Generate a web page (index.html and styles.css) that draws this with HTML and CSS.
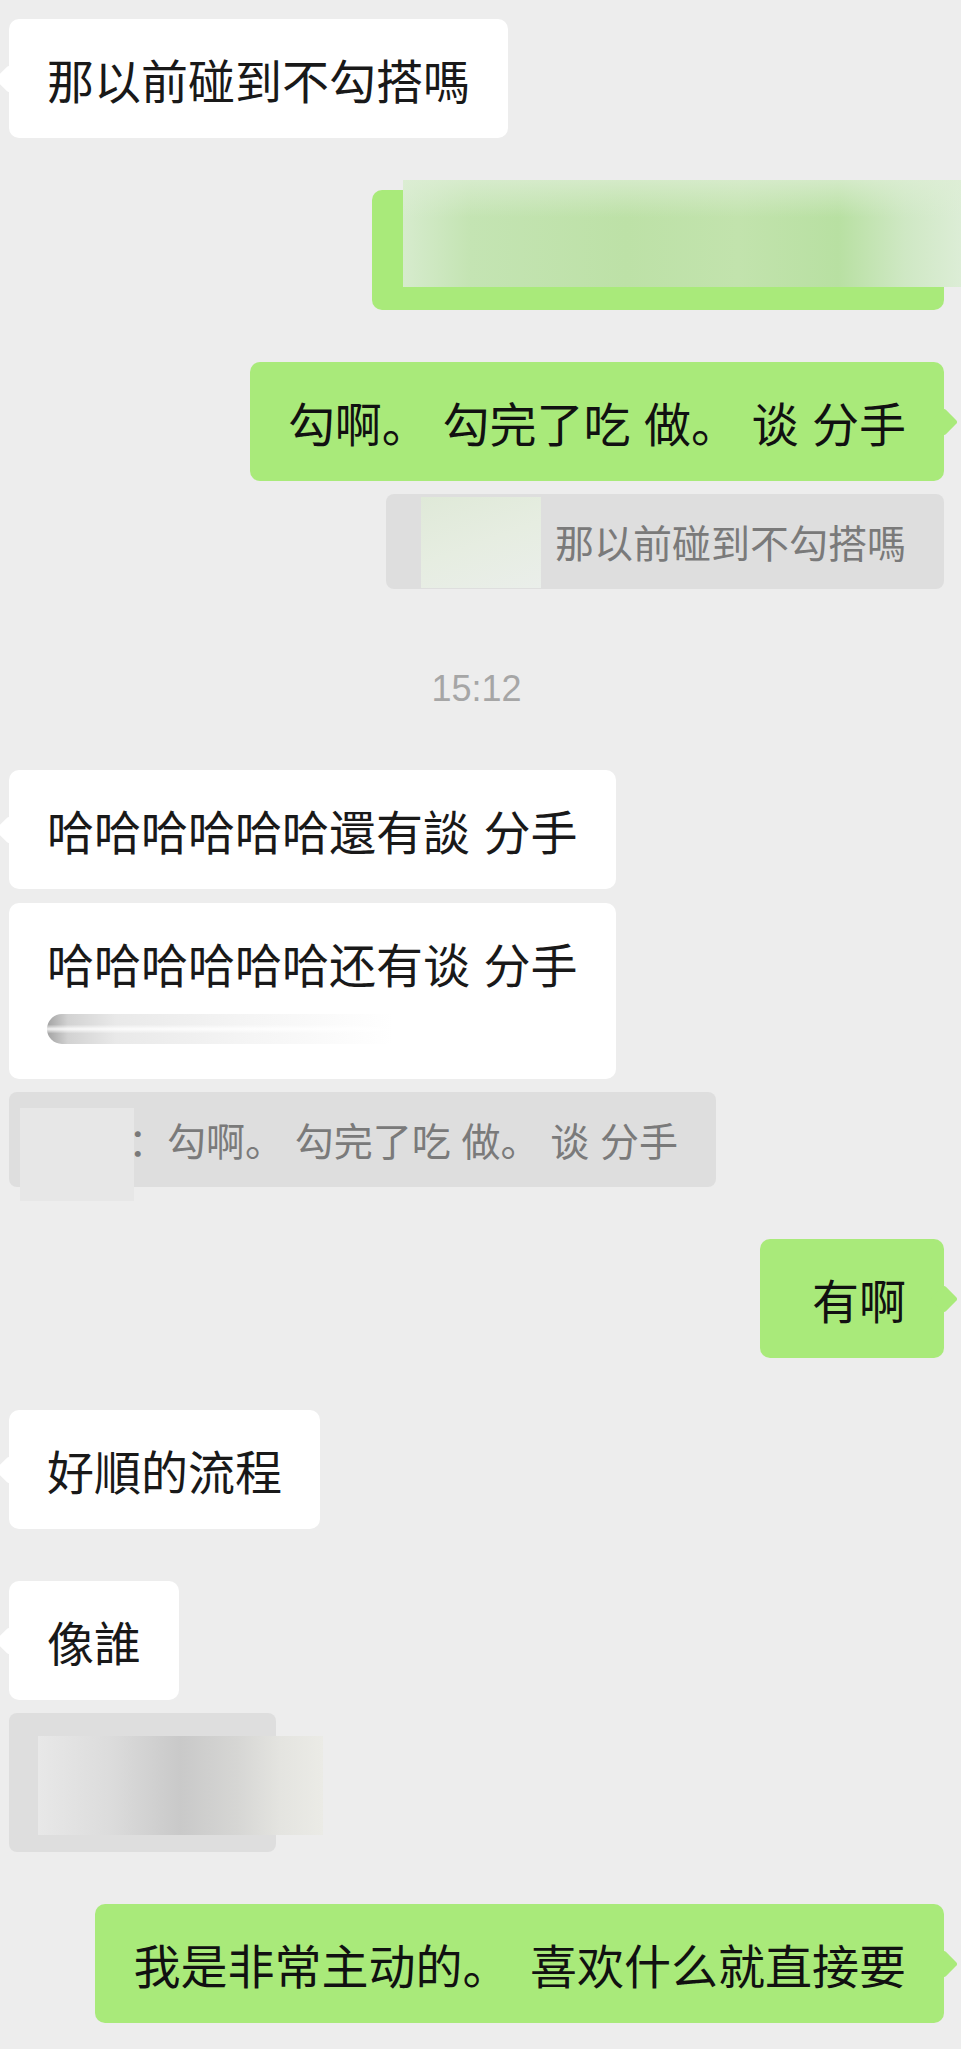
FILE: index.html
```html
<!DOCTYPE html>
<html lang="zh">
<head>
<meta charset="UTF-8">
<meta name="viewport" content="width=device-width, initial-scale=1.0">
<title>聊天记录</title>
<link rel="stylesheet" href="styles.css">
</head>
<body>
    <div class="chat">
        <div class="row left">
            <div class="bubble tail">那以前碰到不勾搭嗎</div>
        </div>

        <div class="row right">
            <div class="bubble green hidden-msg">
                <div class="blur blur-green"></div>
            </div>
        </div>

        <div class="row right">
            <div class="bubble green tail">勾啊。 勾完了吃 做。 谈 分手</div>
        </div>
        <div class="row right quote-row">
            <div class="quote quote-self">
                <span class="blur blur-name"></span>那以前碰到不勾搭嗎
            </div>
        </div>

        <div class="time">15:12</div>

        <div class="row left">
            <div class="bubble tail">哈哈哈哈哈哈還有談 分手</div>
        </div>
        <div class="row left follow">
            <div class="bubble">
                哈哈哈哈哈哈还有谈 分手
                <span class="blur-line"></span>
            </div>
        </div>
        <div class="row left quote-row">
            <div class="quote quote-other">
                <span class="blur blur-name2"></span>：勾啊。 勾完了吃 做。 谈 分手
            </div>
        </div>

        <div class="row right">
            <div class="bubble green tail">&nbsp;有啊</div>
        </div>

        <div class="row left">
            <div class="bubble tail">好順的流程</div>
        </div>

        <div class="row left">
            <div class="bubble tail">像誰</div>
        </div>
        <div class="row left quote-row">
            <div class="quote quote-image">
                <span class="blur blur-gray"></span>
            </div>
        </div>

        <div class="row right">
            <div class="bubble green tail wide-gap">我是非常主动的。 喜欢什么就直接要</div>
        </div>
    </div>
</body>
</html>
```

FILE: styles.css
```css
html {
    background: #ededed;
}

body {
    margin: 0;
    font-family: "Noto Sans CJK SC", "Noto Sans CJK TC", sans-serif;
    color: #191919;
}

.chat {
    padding: 19px 17px 23px 9px;
}

.row {
    display: flex;
    justify-content: flex-start;
    margin-top: 52px;
}

.row:first-child {
    margin-top: 0;
}

.row.right {
    justify-content: flex-end;
}

.row.quote-row {
    margin-top: 13px;
}

.row.follow {
    margin-top: 14px;
}

.bubble {
    position: relative;
    background: #ffffff;
    border-radius: 10px;
    padding: 27px 38px;
    font-size: 47px;
    line-height: 65px;
    white-space: nowrap;
    word-spacing: 3px;
}

.bubble.green {
    background: #a9ea7a;
    color: #111;
}

.bubble.wide-gap {
    word-spacing: 10px;
}

.bubble.tail::after {
    content: '';
    position: absolute;
    top: 50px;
    width: 20px;
    height: 20px;
    background: inherit;
    border-radius: 3px;
    transform: rotate(45deg);
}

.left .bubble.tail::after {
    left: -10px;
}

.right .bubble.tail::after {
    right: -10px;
}

.hidden-msg {
    box-sizing: border-box;
    width: 572px;
    height: 120px;
    padding: 0;
}

.blur {
    position: absolute;
    display: block;
}

.blur-green {
    left: 31px;
    top: -10px;
    right: -17px;
    height: 107px;
    background:
        linear-gradient(to bottom, rgba(222, 238, 214, 0.7), rgba(222, 238, 214, 0) 35%),
        linear-gradient(to right, #d6ebcd 0%, #c4e4b3 12%, #bde1a7 40%, #c2e3ad 60%, #b8e0a2 78%, #cfe8c4 90%, #dcedd6 100%);
}

.blur-line {
    display: block;
    width: 346px;
    height: 30px;
    margin-top: 19px;
    margin-bottom: 8px;
    border-radius: 15px 0 0 15px;
    background:
        linear-gradient(to bottom, rgba(255, 255, 255, 0) 35%, rgba(255, 255, 255, 0.85) 50%, rgba(255, 255, 255, 0) 65%),
        linear-gradient(to right, #a3a3a3 0%, #d2d2d2 6%, #e9e9e9 20%, #f4f4f4 55%, #ffffff 100%);
}

.quote {
    position: relative;
    background: #dedede;
    border-radius: 8px;
    padding: 20px 38px;
    font-size: 39px;
    line-height: 55px;
    color: #7a7a7a;
    white-space: nowrap;
    word-spacing: 2px;
}

.quote-self {
    padding-left: 169px;
}

.blur-name {
    left: 35px;
    top: 3px;
    width: 120px;
    height: 91px;
    background: linear-gradient(160deg, #dfe9d8 0%, #e6ede1 50%, #eaeeea 100%);
}

.quote-other {
    padding-left: 119px;
}

.blur-name2 {
    left: 11px;
    top: 16px;
    width: 114px;
    height: 93px;
    background: #e7e7e7;
}

.quote-image {
    box-sizing: border-box;
    width: 267px;
    height: 139px;
    padding: 0;
}

.blur-gray {
    left: 29px;
    top: 23px;
    width: 285px;
    height: 99px;
    background: linear-gradient(to right, #e8e8e8 0%, #dcdcdc 25%, #c9c9c9 50%, #d6d6d4 70%, #e4e4e0 85%, #ebebe6 100%);
}

.time {
    margin-top: 71px;
    text-align: center;
    font-family: "Liberation Sans", Arial, sans-serif;
    font-size: 36px;
    line-height: 58px;
    color: #a6a6a6;
}
```
